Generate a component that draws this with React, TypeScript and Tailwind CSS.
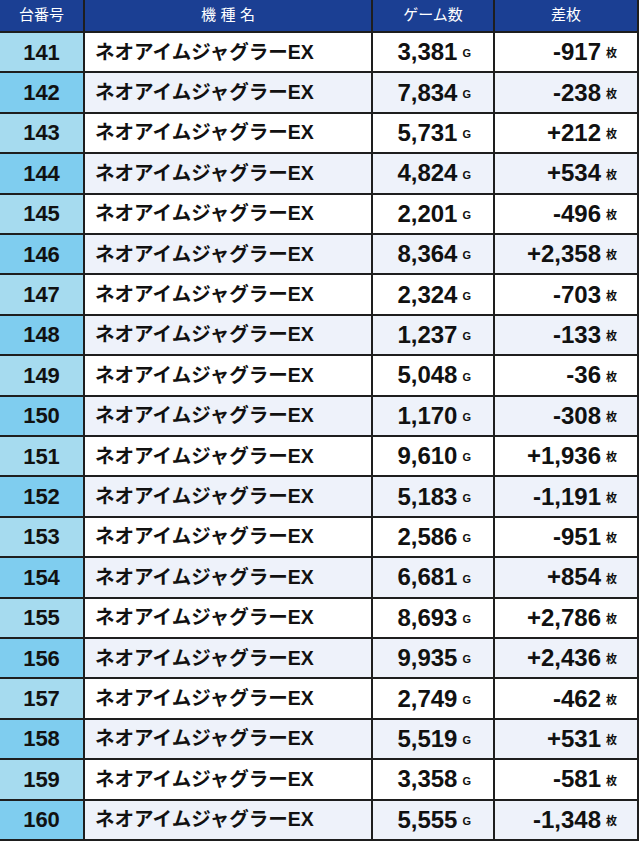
const rows: [number, string, string][] = [
  [141, "3,381", "-917"],
  [142, "7,834", "-238"],
  [143, "5,731", "+212"],
  [144, "4,824", "+534"],
  [145, "2,201", "-496"],
  [146, "8,364", "+2,358"],
  [147, "2,324", "-703"],
  [148, "1,237", "-133"],
  [149, "5,048", "-36"],
  [150, "1,170", "-308"],
  [151, "9,610", "+1,936"],
  [152, "5,183", "-1,191"],
  [153, "2,586", "-951"],
  [154, "6,681", "+854"],
  [155, "8,693", "+2,786"],
  [156, "9,935", "+2,436"],
  [157, "2,749", "-462"],
  [158, "5,519", "+531"],
  [159, "3,358", "-581"],
  [160, "5,555", "-1,348"],
];

const font = { fontFamily: '"Liberation Sans", "Noto Sans CJK JP", sans-serif' };

export default function App() {
  return (
    <div className="w-[640px] h-[841px] bg-white" style={font}>
      <div className="grid w-[639px] h-[841px] grid-cols-[83px_286px_120px_142px] grid-rows-[31px_repeat(20,1fr)] gap-[2px] bg-[#1e1e1e] border-r-2 border-b-2 border-[#1e1e1e]">
        <HeaderCell>台番号</HeaderCell>
        <HeaderCell>
          <span className="tracking-[0.3em] pl-[0.3em]">機種名</span>
        </HeaderCell>
        <HeaderCell>ゲーム数</HeaderCell>
        <HeaderCell>差枚</HeaderCell>

        {rows.map(([no, games, diff], i) => (
          <Row key={no} no={no} games={games} diff={diff} even={i % 2 === 1} />
        ))}
      </div>
    </div>
  );
}

function HeaderCell({ children }: { children: React.ReactNode }) {
  return (
    <div className="bg-[#1b3f93] text-white text-[15px] flex items-center justify-center">
      {children}
    </div>
  );
}

function Row({
  no,
  games,
  diff,
  even,
}: {
  no: number;
  games: string;
  diff: string;
  even: boolean;
}) {
  const bg = even ? "bg-[#eef2fa]" : "bg-white";
  return (
    <>
      <div
        className={`${even ? "bg-[#7fcdef]" : "bg-[#a6dbef]"} flex items-center justify-center text-[22px] font-bold text-[#111]`}
      >
        {no}
      </div>
      <div className={`${bg} flex items-center pl-[10px] text-[19.5px] font-bold text-[#111]`}>
        ネオアイムジャグラーEX
      </div>
      <div className={`${bg} flex items-center justify-end pr-[22px] text-[#111]`}>
        <span className="text-[24px] font-bold">{games}</span>
        <span className="text-[11px] font-bold ml-[5px] mt-[3px]">G</span>
      </div>
      <div className={`${bg} flex items-center justify-end pr-[20px] text-[#111]`}>
        <span className="text-[24px] font-bold">{diff}</span>
        <span className="text-[11px] font-bold ml-[5px] mt-[3px]">枚</span>
      </div>
    </>
  );
}
